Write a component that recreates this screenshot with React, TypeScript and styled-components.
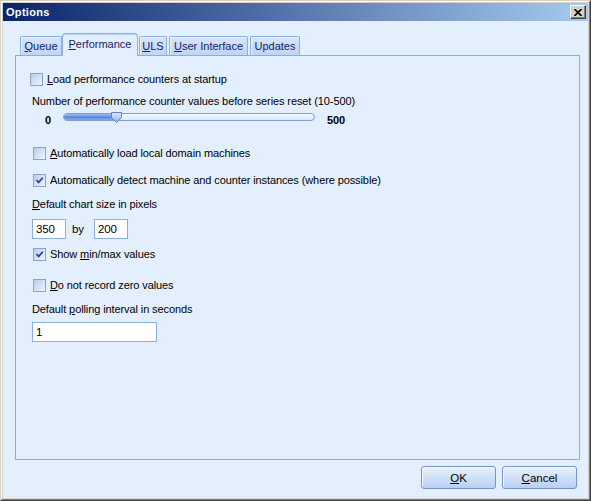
import React from "react";
import styled, { createGlobalStyle } from "styled-components";

const GlobalStyle = createGlobalStyle`
  html, body {
    margin: 0;
    padding: 0;
    background: #d4d0c8;
  }
  body {
    font-family: "Liberation Sans", Arial, sans-serif;
    font-size: 11px;
    color: #000;
  }
`;

const Window = styled.div`
  width: 591px;
  height: 501px;
  box-sizing: border-box;
  border: 1px solid;
  border-color: #d4d0c8 #404040 #404040 #d4d0c8;
  display: flex;
`;

const Frame = styled.div`
  flex: 1;
  box-sizing: border-box;
  border: 1px solid;
  border-color: #ffffff #808080 #808080 #ffffff;
  padding: 1px;
  background: #d4d0c8;
  display: flex;
  flex-direction: column;
`;

const TitleBar = styled.div`
  height: 18px;
  flex: none;
  display: flex;
  align-items: center;
  justify-content: space-between;
  padding: 0 2px 0 3px;
  background: linear-gradient(90deg, #0a246a 0%, #a6caf0 100%);
`;

const Title = styled.span`
  color: #fff;
  font-weight: bold;
  font-size: 11px;
  letter-spacing: 0.3px;
`;

const CloseButton = styled.div`
  width: 16px;
  height: 14px;
  box-sizing: border-box;
  background: #d4d0c8;
  border: 1px solid;
  border-color: #ffffff #404040 #404040 #ffffff;
  box-shadow: inset -1px -1px 0 #808080;
  display: flex;
  align-items: center;
  justify-content: center;
`;

const Body = styled.div`
  flex: 1;
  display: flex;
  flex-direction: column;
  background: #e3effd;
  padding: 12px 8px 9px 12px;
`;

const TabStrip = styled.div`
  height: 23px;
  flex: none;
  display: flex;
  align-items: flex-end;
  padding-left: 5px;
  margin-bottom: -1px;
  position: relative;
  z-index: 1;
`;

const Tab = styled.div<{ $w: number; $ml?: number; $active?: boolean }>`
  width: ${(p) => p.$w}px;
  margin-left: ${(p) => p.$ml ?? 0}px;
  height: ${(p) => (p.$active ? 23 : 19)}px;
  margin-bottom: ${(p) => (p.$active ? 0 : 1)}px;
  box-sizing: border-box;
  border: 1px solid #8cb0e6;
  border-bottom: none;
  border-radius: ${(p) => (p.$active ? "4px 4px 0 0" : "2px 2px 0 0")};
  background: ${(p) =>
    p.$active
      ? "#e3effd"
      : "linear-gradient(180deg, #d6e5fa 0%, #bfd5f5 100%)"};
  box-shadow: ${(p) => (p.$active ? "inset 0 1px 0 #b9d1f3" : "inset 1px 1px 0 #eaf2fd")};
  color: #17216a;
  display: flex;
  align-items: center;
  justify-content: center;
  padding-bottom: ${(p) => (p.$active ? 2 : 0)}px;
  white-space: nowrap;
`;

const Panel = styled.div`
  flex: 1;
  box-sizing: border-box;
  border: 1px solid #86aee6;
  background: #e3effd;
  padding: 0 16px;
  display: flex;
  flex-direction: column;
  align-items: flex-start;
  letter-spacing: -0.1px;
`;

const CheckRow = styled.label<{ $mt: number; $indent: number }>`
  display: flex;
  align-items: center;
  gap: 4px;
  height: 13px;
  line-height: 13px;
  margin-top: ${(p) => p.$mt}px;
  margin-left: ${(p) => p.$indent}px;
  white-space: nowrap;
`;

const Box = styled.span`
  width: 13px;
  height: 13px;
  flex: none;
  box-sizing: border-box;
  border: 1px solid #8aa3cf;
  background: linear-gradient(135deg, #b7cbec 0%, #d9e5f8 60%, #f1f5fc 100%);
  display: flex;
  align-items: center;
  justify-content: center;
`;

const Label = styled.div<{ $mt: number }>`
  height: 13px;
  line-height: 13px;
  margin-top: ${(p) => p.$mt}px;
  white-space: nowrap;
`;

const SliderRow = styled.div`
  display: flex;
  align-items: flex-start;
  margin-top: 4px;
  margin-left: 13px;
`;

const SliderValue = styled.span<{ $ml: number }>`
  font-weight: bold;
  line-height: 13px;
  margin-top: 2px;
  margin-left: ${(p) => p.$ml}px;
`;

const Track = styled.div`
  position: relative;
  width: 252px;
  height: 8px;
  margin-top: 1px;
  margin-left: 12px;
  box-sizing: border-box;
  border: 1px solid #7f9fd3;
  border-radius: 4px;
  background: linear-gradient(180deg, #f4f8fe 0%, #dbe7f9 100%);
`;

const TrackFill = styled.div`
  position: absolute;
  left: 0;
  top: 0;
  bottom: 0;
  border-radius: 3px 0 0 3px;
  background: linear-gradient(180deg, #9dbdf0 0%, #5887d8 55%, #86abeb 100%);
`;

const Thumb = styled.svg`
  position: absolute;
  top: -2px;
`;

const InputRow = styled.div`
  display: flex;
  align-items: center;
  margin-top: 8px;
`;

const TextBox = styled.div<{ $w: number; $mt?: number }>`
  width: ${(p) => p.$w}px;
  height: 20px;
  margin-top: ${(p) => p.$mt ?? 0}px;
  box-sizing: border-box;
  border: 1px solid #8aaee2;
  background: #fff;
  padding-left: 3px;
  display: flex;
  align-items: center;
  font-size: 11.5px;
`;

const By = styled.span`
  margin: 0 10px 0 6px;
  font-size: 11.5px;
`;

const ButtonRow = styled.div`
  display: flex;
  justify-content: flex-end;
  gap: 6px;
  margin-top: 6px;
  padding-right: 3px;
`;

const Button = styled.div`
  width: 75px;
  height: 23px;
  box-sizing: border-box;
  border: 1px solid #7595cd;
  border-radius: 3px;
  background: linear-gradient(180deg, #eaf1fc 0%, #d3e2f8 45%, #b8cff2 100%);
  box-shadow: inset 1px 1px 0 #f7faff;
  display: flex;
  align-items: center;
  justify-content: center;
  font-size: 11.5px;
`;

const Check = () => (
  <svg width="9" height="9" viewBox="0 0 9 9">
    <path d="M1.5 4 L3.6 6.4 L7.8 1.8" fill="none" stroke="#21419a" strokeWidth="1.7" />
  </svg>
);

const CheckBox = ({
  checked,
  mt,
  indent,
  children,
}: {
  checked?: boolean;
  mt: number;
  indent: number;
  children: React.ReactNode;
}) => (
  <CheckRow $mt={mt} $indent={indent}>
    <Box>{checked && <Check />}</Box>
    <span>{children}</span>
  </CheckRow>
);

const Slider = ({ value, min, max }: { value: number; min: number; max: number }) => {
  const frac = (value - min) / (max - min);
  const left = Math.round(frac * (252 - 11));
  return (
    <SliderRow>
      <SliderValue $ml={0}>{min}</SliderValue>
      <Track>
        <TrackFill style={{ width: left + 5 }} />
        <Thumb width="11" height="11" viewBox="0 0 11 11" style={{ left: left - 1 }}>
          <defs>
            <linearGradient id="thumbG" x1="0" y1="0" x2="0" y2="1">
              <stop offset="0" stopColor="#dce8fb" />
              <stop offset="1" stopColor="#8fb1e8" />
            </linearGradient>
          </defs>
          <path d="M0.5 0.5 H10.5 V5.5 L5.5 10.5 L0.5 5.5 Z" fill="url(#thumbG)" stroke="#5f84c4" />
        </Thumb>
      </Track>
      <SliderValue $ml={12}>{max}</SliderValue>
    </SliderRow>
  );
};

export default function App() {
  return (
    <>
      <GlobalStyle />
      <Window>
        <Frame>
          <TitleBar>
            <Title>Options</Title>
            <CloseButton>
              <svg width="8" height="7" viewBox="0 0 8 7">
                <path d="M0.5 0 L7.5 7 M7.5 0 L0.5 7" stroke="#000" strokeWidth="1.6" />
              </svg>
            </CloseButton>
          </TitleBar>
          <Body>
            <TabStrip>
              <Tab $w={42}><u>Q</u>ueue</Tab>
              <Tab $w={76} $active><u>P</u>erformance</Tab>
              <Tab $w={28} $ml={1}><u>U</u>LS</Tab>
              <Tab $w={79} $ml={2}><u>U</u>ser Interface</Tab>
              <Tab $w={50} $ml={2}>Updates</Tab>
            </TabStrip>
            <Panel>
              <CheckBox mt={17} indent={-2}>
                <u>L</u>oad performance counters at startup
              </CheckBox>
              <Label $mt={9}>Number of performance counter values before series reset (10-500)</Label>
              <Slider value={100} min={0} max={500} />
              <CheckBox mt={20} indent={1}>
                <u>A</u>utomatically load local domain machines
              </CheckBox>
              <CheckBox mt={14} indent={1} checked>
                Automatically detect machine and counter instances (where possible)
              </CheckBox>
              <Label $mt={11}>
                <u>D</u>efault chart size in pixels
              </Label>
              <InputRow>
                <TextBox $w={34}>350</TextBox>
                <By>by</By>
                <TextBox $w={34}>200</TextBox>
              </InputRow>
              <CheckBox mt={9} indent={1} checked>
                Show <u>m</u>in/max values
              </CheckBox>
              <CheckBox mt={18} indent={1}>
                <u>D</u>o not record zero values
              </CheckBox>
              <Label $mt={11}>
                Default <u>p</u>olling interval in seconds
              </Label>
              <TextBox $w={125} $mt={6}>1</TextBox>
            </Panel>
            <ButtonRow>
              <Button>
                <span><u>O</u>K</span>
              </Button>
              <Button>
                <span><u>C</u>ancel</span>
              </Button>
            </ButtonRow>
          </Body>
        </Frame>
      </Window>
    </>
  );
}
